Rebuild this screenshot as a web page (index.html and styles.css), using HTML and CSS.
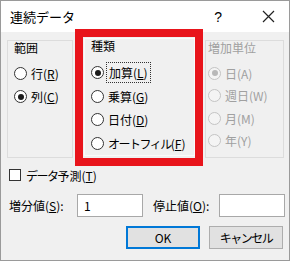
FILE: index.html
```html
<!DOCTYPE html>
<html lang="ja">
<head>
  <meta charset="UTF-8" />
  <title>連続データ</title>
  <link rel="stylesheet" href="styles.css">
</head>
<body>
  <div class="window">
    <div class="titlebar">
      <span class="title">連続データ</span>
      <span class="help">?</span>
      <span class="close">
        <svg width="13" height="13" viewBox="0 0 13 13"><path d="M1 1 L12 12 M12 1 L1 12" stroke="#222" stroke-width="1.2" fill="none"/></svg>
      </span>
    </div>

    <div class="content">
      <div class="groups">
        <div class="group group-range">
          <div class="group-label">範囲</div>
          <div class="radio-list">
            <div class="radio"><span class="dot"></span>行(<u>R</u>)</div>
            <div class="radio checked"><span class="dot"></span>列(<u>C</u>)</div>
          </div>
        </div>

        <div class="highlight">
          <div class="group group-type">
            <div class="group-label">種類</div>
            <div class="radio-list">
              <div class="radio checked"><span class="dot"></span><span class="focus">加算(<u>L</u>)</span></div>
              <div class="radio"><span class="dot"></span>乗算(<u>G</u>)</div>
              <div class="radio"><span class="dot"></span>日付(<u>D</u>)</div>
              <div class="radio"><span class="dot"></span><span class="kana">オートフィル</span>(<u>F</u>)</div>
            </div>
          </div>
        </div>

        <div class="group group-unit disabled">
          <div class="group-label">増加単位</div>
          <div class="radio-list">
            <div class="radio checked"><span class="dot"></span>日(A)</div>
            <div class="radio"><span class="dot"></span>週日(W)</div>
            <div class="radio"><span class="dot"></span>月(M)</div>
            <div class="radio"><span class="dot"></span>年(Y)</div>
          </div>
        </div>
      </div>

      <div class="check-row">
        <span class="checkbox"></span><span class="kana">データ</span>予測(<u>T</u>)
      </div>

      <div class="value-row">
        <span class="field-label">増分値(<u>S</u>):</span>
        <div class="input">1</div>
        <span class="field-label stop">停止値(<u>O</u>):</span>
        <div class="input"></div>
      </div>

      <div class="buttons">
        <button class="btn default">OK</button>
        <button class="btn"><span class="kana">キャンセル</span></button>
      </div>
    </div>
  </div>
</body>
</html>
```

FILE: styles.css
```css
body {
  margin: 0;
  background: #fff;
  font-family: "Noto Sans CJK JP", "Noto Sans", sans-serif;
  font-size: 12px;
  color: #000;
}

.window {
  width: 288px;
  height: 259px;
  border: 1px solid #9a9a9a;
  background: #f0f0f0;
  display: flex;
  flex-direction: column;
}

.titlebar {
  height: 31px;
  background: #fff;
  display: flex;
  align-items: center;
  padding-left: 9px;
  flex-shrink: 0;
}

.title {
  font-size: 13px;
  flex: 1;
}

.help {
  font-size: 14px;
  font-family: "Liberation Sans", sans-serif;
  margin-right: 40px;
}

.close {
  display: flex;
  margin-right: 14px;
}

.content {
  padding: 0 0 0 6px;
  display: flex;
  flex-direction: column;
}

.groups {
  display: flex;
  align-items: flex-start;
}

.group {
  border: 1px solid #dcdcdc;
  box-sizing: border-box;
  padding: 0 0 0 6px;
}

.group-label {
  line-height: 14px;
  height: 14px;
}

.group-range {
  width: 66px;
  height: 118px;
  margin-top: 8px;
}

.highlight {
  margin-top: -3px;
  margin-left: 2px;
  width: 128px;
  height: 137px;
  box-sizing: border-box;
  border: 8px solid #e8141b;
  padding: 1px 0 0 1px;
}

.group-type {
  height: 118px;
  border-color: #fafafa;
  padding-left: 6px;
}

.group-unit {
  width: 79px;
  height: 118px;
  margin-top: 8px;
  margin-left: 2px;
  padding-left: 2px;
}

.radio-list {
  margin-top: 7px;
  display: flex;
  flex-direction: column;
}

.radio {
  height: 23px;
  display: flex;
  align-items: center;
  white-space: nowrap;
}

.kana {
  letter-spacing: -1.5px;
}

.dot {
  width: 11px;
  height: 11px;
  border: 1px solid #333;
  border-radius: 50%;
  background: #fff;
  margin-right: 4px;
  display: flex;
  align-items: center;
  justify-content: center;
  flex-shrink: 0;
}

.radio.checked .dot::after {
  content: "";
  width: 6px;
  height: 6px;
  border-radius: 50%;
  background: #1a1a1a;
}

.group-type .radio-list {
  margin-top: 8px;
}

.group-type .radio {
  height: 23.5px;
}

.focus {
  outline: 1px dotted #333;
  outline-offset: 1px;
  padding: 0 1px;
}

.group-unit .radio {
  height: 22.5px;
}

.disabled {
  color: #a0a0a0;
}

.disabled .dot {
  border-color: #c4c4c4;
  background: #f4f4f4;
}

.disabled .radio.checked .dot::after {
  background: #b8b8b8;
}

u {
  text-decoration: underline;
  text-underline-offset: 1px;
}

.check-row {
  display: flex;
  align-items: center;
  margin-top: 2px;
  margin-left: 2px;
  height: 14px;
}

.checkbox {
  width: 10px;
  height: 10px;
  border: 1px solid #333;
  background: #fff;
  margin-right: 5px;
}

.value-row {
  display: flex;
  align-items: center;
  margin-top: 12px;
  margin-left: 2px;
}

.field-label {
  width: 68px;
}

.field-label.stop {
  margin-left: 10px;
  width: 66px;
}

.input {
  border: 1px solid #a8a8a8;
  background: #fff;
  display: flex;
  align-items: center;
  padding-left: 6px;
  box-sizing: border-box;
  width: 66px;
  height: 23px;
}

.buttons {
  display: flex;
  justify-content: flex-end;
  gap: 9px;
  margin-top: 9px;
  padding-right: 6px;
}

.btn {
  font-family: inherit;
  font-size: 12px;
  height: 23px;
  background: #e1e1e1;
  border: 1px solid #adadad;
  padding: 0;
  width: 74px;
}

.btn.default {
  border: 2px solid #0078d7;
  width: 74px;
}
```
